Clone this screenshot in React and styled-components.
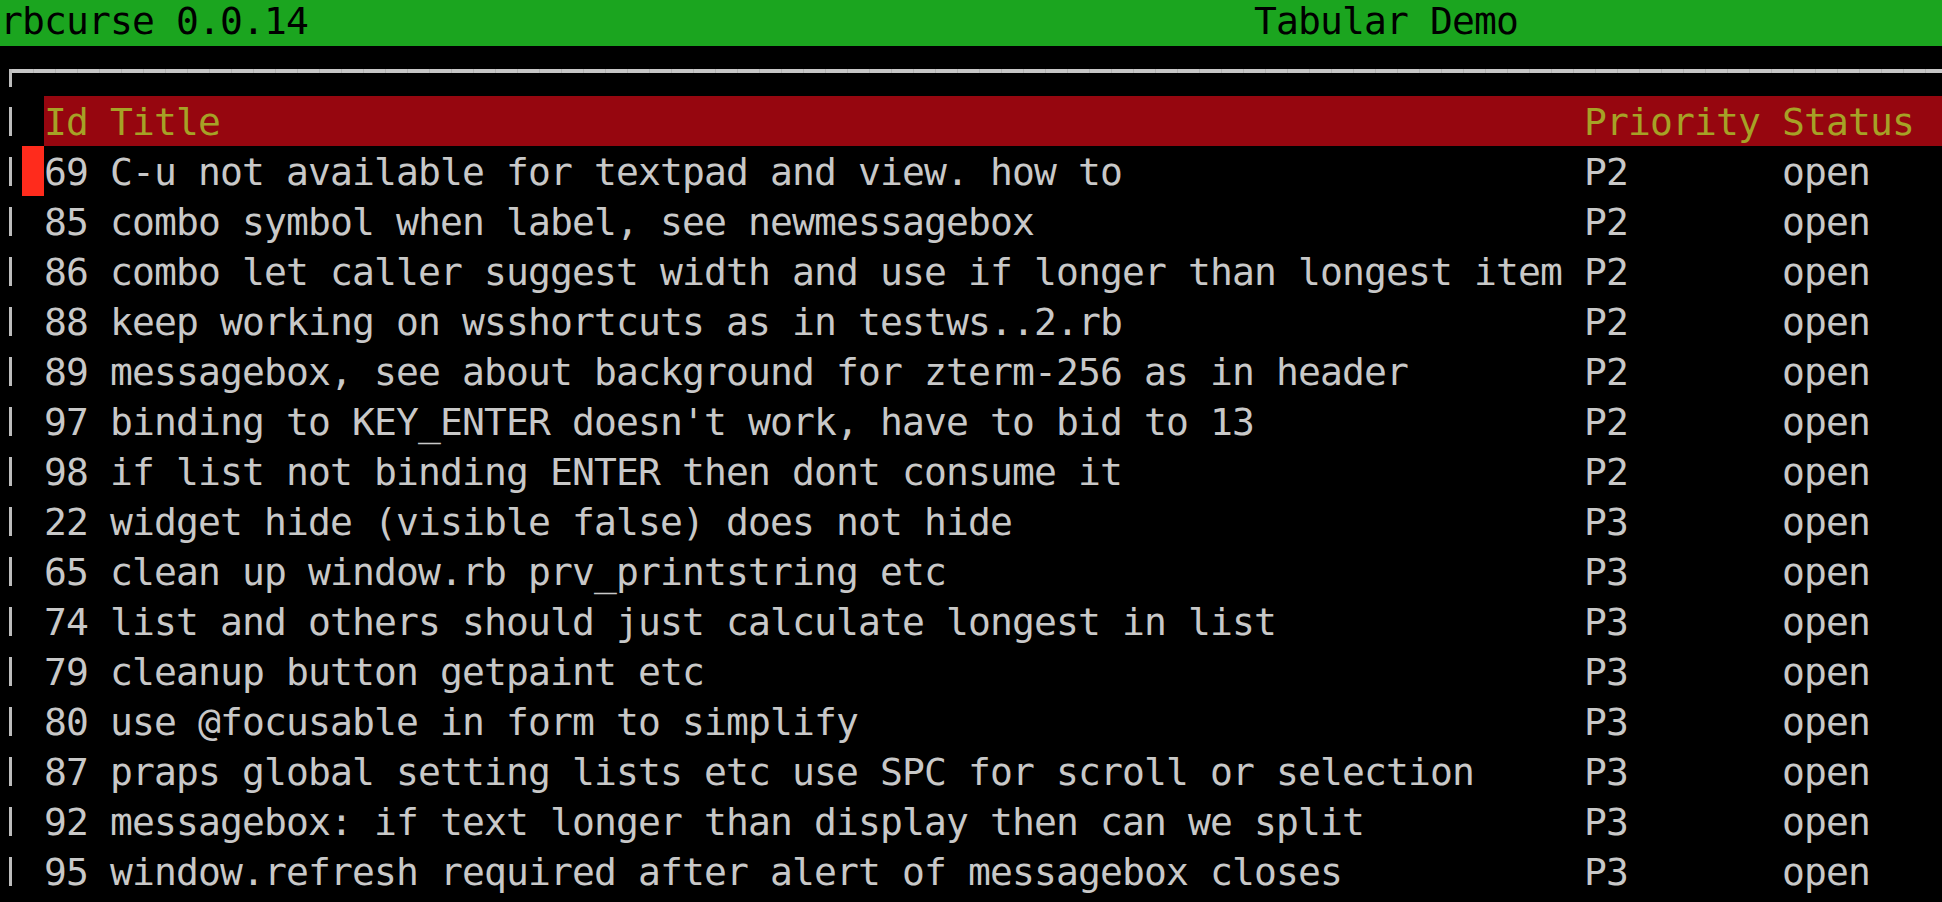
import React from "react";
import styled, { createGlobalStyle } from "styled-components";

const CELL = 22;
const FONT = 38;
const SPACING = CELL - FONT * 0.60205;

const GlobalStyle = createGlobalStyle`
  html, body { margin: 0; padding: 0; background: #000; }
  body { overflow: hidden; }
`;

const Screen = styled.div`
  width: 1942px;
  height: 902px;
  background: #000;
  overflow: hidden;
  font-family: "DejaVu Sans Mono", "Liberation Mono", monospace;
  font-size: ${FONT}px;
  letter-spacing: ${SPACING}px;
  white-space: pre;
  -webkit-font-smoothing: antialiased;
`;

const TitleBar = styled.div`
  display: flex;
  height: 46px;
  line-height: 42px;
  background: #1ba51f;
  color: #000;
`;

const Cols = styled.span`
  display: block;
  flex: none;
  width: ${(p) => p.$cols * CELL}px;
`;

const FrameRow = styled.div`
  height: 50px;
  display: flex;
`;

const Corner = styled.div`
  flex: 1;
  margin: 23px 0 0 9px;
  height: 18px;
  border-left: 3px solid #bdbdbd;
  background-image: repeating-linear-gradient(
    to right,
    #c6c6c6 0 ${CELL - 1}px,
    #b3b3b3 ${CELL - 1}px ${CELL}px
  );
  background-size: 100% 4px;
  background-repeat: no-repeat;
`;

const Row = styled.div`
  display: flex;
  height: 50px;
  line-height: 50px;
`;

const Gutter = styled.div`
  flex: none;
  width: ${CELL}px;
  display: flex;
`;

const Pipe = styled.div`
  width: 3px;
  height: 29px;
  margin: 11px 0 0 9px;
  background: #bdbdbd;
`;

const CursorCell = styled.div`
  flex: none;
  width: ${CELL}px;
  background: ${(p) => (p.$active ? "#ff2b1c" : "transparent")};
`;

const Body = styled.div`
  flex: 1;
  display: flex;
  padding-top: 1px;
  box-sizing: border-box;
  background: ${(p) => (p.$header ? "#96060f" : "transparent")};
  color: ${(p) => (p.$header ? "#a6a226" : "#c8c8c8")};
`;

const rows = [
  ["69", "C-u not available for textpad and view. how to", "P2", "open"],
  ["85", "combo symbol when label, see newmessagebox", "P2", "open"],
  ["86", "combo let caller suggest width and use if longer than longest item", "P2", "open"],
  ["88", "keep working on wsshortcuts as in testws..2.rb", "P2", "open"],
  ["89", "messagebox, see about background for zterm-256 as in header", "P2", "open"],
  ["97", "binding to KEY_ENTER doesn't work, have to bid to 13", "P2", "open"],
  ["98", "if list not binding ENTER then dont consume it", "P2", "open"],
  ["22", "widget hide (visible false) does not hide", "P3", "open"],
  ["65", "clean up window.rb prv_printstring etc", "P3", "open"],
  ["74", "list and others should just calculate longest in list", "P3", "open"],
  ["79", "cleanup button getpaint etc", "P3", "open"],
  ["80", "use @focusable in form to simplify", "P3", "open"],
  ["87", "praps global setting lists etc use SPC for scroll or selection", "P3", "open"],
  ["92", "messagebox: if text longer than display then can we split", "P3", "open"],
  ["95", "window.refresh required after alert of messagebox closes", "P3", "open"],
];

function Cells({ id, title, priority, status }) {
  return (
    <>
      <Cols $cols={3}>{id}</Cols>
      <Cols $cols={67}>{title}</Cols>
      <Cols $cols={9}>{priority}</Cols>
      <span>{status}</span>
    </>
  );
}

export default function App() {
  return (
    <>
      <GlobalStyle />
      <Screen>
        <TitleBar>
          <Cols $cols={57}>rbcurse 0.0.14</Cols>
          <span>Tabular Demo</span>
        </TitleBar>
        <FrameRow>
          <Corner />
        </FrameRow>
        <Row>
          <Gutter>
            <Pipe />
          </Gutter>
          <CursorCell />
          <Body $header>
            <Cells id="Id" title="Title" priority="Priority" status="Status" />
          </Body>
        </Row>
        {rows.map(([id, title, priority, status], i) => (
          <Row key={id + i}>
            <Gutter>
              <Pipe />
            </Gutter>
            <CursorCell $active={i === 0} />
            <Body>
              <Cells id={id} title={title} priority={priority} status={status} />
            </Body>
          </Row>
        ))}
      </Screen>
    </>
  );
}
